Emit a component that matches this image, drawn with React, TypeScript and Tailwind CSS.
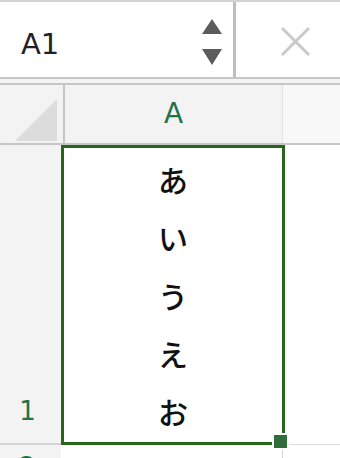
import React from 'react';

const kana = ['あ', 'い', 'う', 'え', 'お'];

export default function App() {
  return (
    <div className="relative h-[458px] w-[340px] overflow-hidden bg-white font-['DejaVu_Sans',sans-serif]">
      {/* Name box + formula bar */}
      <div className="flex h-[77px] border-t-2 border-[#d2d2d2]">
        <div className="flex w-[236px] items-center border-r-[3px] border-[#bdbdbd] pl-[21px] pr-[11px]">
          <span className="mt-[10px] flex-1 text-[29px] leading-none text-[#222]">A1</span>
          <div className="mt-[4px] flex flex-col items-center gap-[15px]">
            <svg width="20" height="15" viewBox="0 0 20 15">
              <polygon points="10,0 20,15 0,15" fill="#5c5c5c" />
            </svg>
            <svg width="20" height="16" viewBox="0 0 20 16">
              <polygon points="0,0 20,0 10,16" fill="#5c5c5c" />
            </svg>
          </div>
        </div>
        <div className="flex flex-1 items-center pl-[44px]">
          <svg width="31" height="31" viewBox="0 0 31 31" className="mt-[4px]">
            <path d="M2 2 L29 29 M29 2 L2 29" stroke="#c9c9c9" strokeWidth="3" />
          </svg>
        </div>
      </div>
      <div className="h-[2px] bg-[#c6c6c6]" />
      <div className="h-[4px] bg-[#f4f4f4]" />
      <div className="h-[2px] bg-[#c6c6c6]" />

      {/* Column header row */}
      <div className="flex h-[60px] border-b-2 border-[#c6c6c6] bg-[#f3f3f3]">
        <div className="relative w-[65px] border-r-2 border-[#c6c6c6]">
          <svg width="42" height="42" viewBox="0 0 42 42" className="absolute bottom-[2px] right-[6px]">
            <polygon points="42,0 42,42 0,42" fill="#dcdcdc" />
          </svg>
        </div>
        <div className="flex w-[218px] items-center justify-center border-r border-[#e2e2e2] text-[28px] text-[#217346]">
          A
        </div>
        <div className="flex-1 bg-[#f8f8f8]" />
      </div>

      {/* Row 1 */}
      <div className="flex h-[300px]">
        <div className="flex w-[61px] items-end justify-center border-b-2 border-[#d4d4d4] bg-[#f3f3f3] pb-[3px] pr-[6px]">
          <span className="text-[26px] leading-[58px] text-[#217346]">1</span>
        </div>
        <div className="flex w-[224px] flex-col items-center justify-end border-[3px] border-[#28641a] bg-white pb-[2px] font-['Noto_Sans_CJK_JP',sans-serif] text-[30px] font-medium leading-[58px] text-[#111]">
          {kana.map((k) => (
            <span key={k}>{k}</span>
          ))}
        </div>
        <div className="flex-1 border-b border-[#dadada]" />
      </div>

      {/* Row 2 (cut off at the window edge) */}
      <div className="flex h-[20px]">
        <div className="flex w-[61px] justify-center bg-[#f3f3f3] pr-[6px] pt-[9px]">
          <span className="text-[26px] leading-none text-[#217346]">2</span>
        </div>
        <div className="w-[222px] border-r border-[#d4d4d4]" />
        <div className="flex-1" />
      </div>

      {/* Fill handle */}
      <div className="absolute left-[272px] top-[433px] h-[17px] w-[17px] border-2 border-white bg-[#2f6e3a]" />
    </div>
  );
}
